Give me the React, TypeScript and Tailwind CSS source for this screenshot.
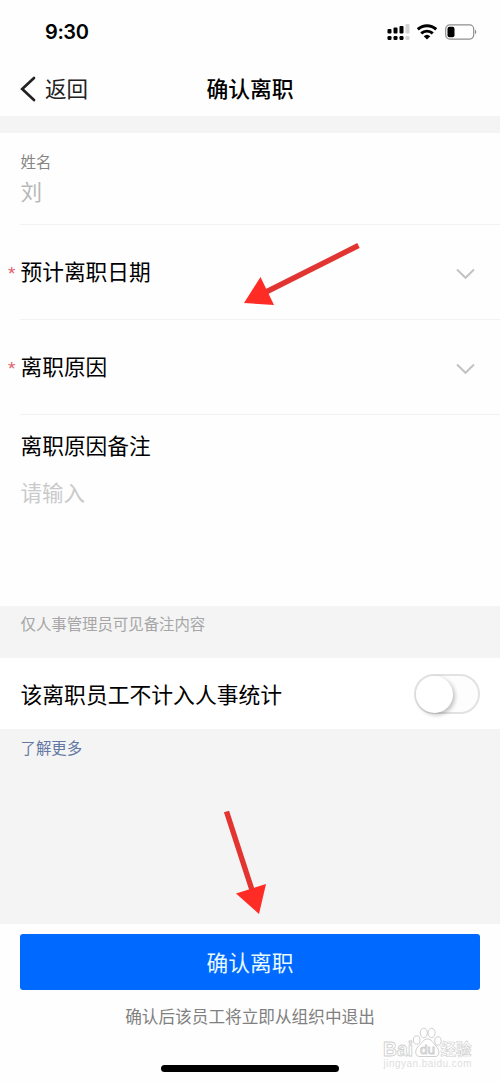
import { useState } from 'react';

function StatusBar() {
  return (
    <div className="flex h-16 items-center justify-between pl-[45px] pr-[23px]">
      <span className="font-['Inter'] text-[20px] font-semibold leading-none tracking-[-0.4px] text-black">9:30</span>
      <div className="flex items-center">
        <svg width="23" height="18" viewBox="0 0 23 18" fill="#000">
          <rect x="0.5" y="6" width="4" height="4.5" rx="1" />
          <rect x="6.5" y="4.5" width="4" height="6" rx="1" />
          <rect x="12.5" y="3" width="4" height="7.5" rx="1" />
          <rect x="18.5" y="1" width="4" height="9.5" rx="1" fill="#d4d4d4" />
          <rect x="0.5" y="13" width="4" height="4" rx="1.2" />
          <rect x="6.5" y="13" width="4" height="4" rx="1.2" />
          <rect x="12.5" y="13" width="4" height="4" rx="1.2" />
          <rect x="18.5" y="13" width="4" height="4" rx="1.2" fill="#d4d4d4" />
        </svg>
        <svg className="ml-[7px]" width="20" height="16" viewBox="0 0 20 16" fill="none" stroke="#000">
          <path d="M0.8 5.4a13.4 13.4 0 0 1 18.4 0" strokeWidth="3.1" />
          <path d="M4.2 9.4a8.5 8.5 0 0 1 11.6 0" strokeWidth="2.9" />
          <path d="M6.7 12.3a4.8 4.8 0 0 1 6.6 0L10 15.6z" fill="#000" stroke="none" />
        </svg>
        <svg className="ml-[8px]" width="32" height="16" viewBox="0 0 32 16">
          <rect x="0.7" y="0.9" width="28" height="14.2" rx="4" fill="#fff" stroke="#8f8f8f" strokeWidth="1.2" />
          <rect x="2.5" y="2.8" width="7" height="10.4" rx="2" fill="#000" />
          <path d="M30 5.8c1.7.5 1.7 3.9 0 4.4z" fill="#8f8f8f" />
        </svg>
      </div>
    </div>
  );
}

function NavBar() {
  return (
    <div className="relative flex h-[52px] justify-center pt-[8px]">
      <button className="absolute left-[20px] top-[8px] flex h-8 items-center text-[21.5px] text-[#222]">
        <svg className="mt-[2px]" width="16" height="26" viewBox="0 0 16 26" fill="none" stroke="#222" strokeWidth="2.7" strokeLinecap="round">
          <path d="M14 2 2.2 13 14 24" />
        </svg>
        <span className="ml-[9px]">返回</span>
      </button>
      <h1 className="text-[21.8px] font-medium leading-8 text-black">确认离职</h1>
    </div>
  );
}

function SelectRow({ label }: { label: string }) {
  return (
    <div className="relative ml-[20px] flex h-[95px] items-center justify-between border-b border-[#f2f2f2] pr-[25px]">
      <span className="absolute left-[-12px] top-[35px] font-['Liberation_Sans'] text-[19px] leading-7 text-[#e0606a]">*</span>
      <span className="-mt-[2px] ml-[0.5px] text-[21.7px] leading-8 text-black">{label}</span>
      <svg className="mt-[4px]" width="19" height="12" viewBox="0 0 19 12" fill="none" stroke="#c2c2c2" strokeWidth="1.9">
        <path d="M1 1.5 9.5 9.8 18 1.5" />
      </svg>
    </div>
  );
}

function Arrows() {
  return (
    <svg className="pointer-events-none absolute left-0 top-0" width="500" height="1082" viewBox="0 0 500 1082">
      <g stroke="#e23430" strokeWidth="5.4">
        <path d="M358.5 245.5 266 292" />
        <path d="M226.5 811.5 252 890" />
      </g>
      <g fill="#ff2b25">
        <path d="M244 303 260.5 277 274 305z" />
        <path d="M259 914 236 893.5 266 884z" />
      </g>
    </svg>
  );
}

function Watermark() {
  return (
    <svg className="absolute bottom-[10px] right-[21px]" width="100" height="46" viewBox="0 0 100 46" stroke="#cfcfcf" fill="#fff">
      <text x="4" y="30" fontFamily="Liberation Sans" fontWeight="700" fontSize="21" strokeWidth="0.9" textLength="30" lengthAdjust="spacingAndGlyphs">Bai</text>
      <ellipse cx="37.7" cy="14" rx="3.3" ry="4.2" />
      <ellipse cx="44.8" cy="7" rx="3.5" ry="4.8" />
      <ellipse cx="52.6" cy="7" rx="3.5" ry="4.8" />
      <ellipse cx="59" cy="15" rx="3.2" ry="4.2" />
      <path d="M48.500 13c4 0 5.500 4 8.500 7s5 10.500-1 10.500h-15c-6 0-5-7.500-1.500-10.500s5-7 9-7z" />
      <text x="41" y="27.500" fontFamily="Liberation Sans" fontSize="12.500" fill="none" strokeWidth="0.9" textLength="15" lengthAdjust="spacingAndGlyphs">du</text>
      <text x="61.500" y="29" fontFamily="Noto Sans CJK SC" fontWeight="700" fontSize="15.500" strokeWidth="0.6">经验</text>
      <text x="4.500" y="41" fontFamily="Liberation Sans" fontSize="10" fill="#dedede" stroke="none" textLength="88">jingyan.baidu.com</text>
    </svg>
  );
}

export default function App() {
  const [excluded, setExcluded] = useState(false);

  return (
    <div className="relative flex h-[1082px] w-[500px] flex-col overflow-hidden bg-[#f4f4f4] font-['Noto_Sans_CJK_SC',sans-serif]">
      <header className="h-[116px] bg-[#fefefe]">
        <StatusBar />
        <NavBar />
      </header>

      <section className="mt-[17px] h-[473px] bg-[#fefefe]">
        <div className="ml-[20px] h-[92px] border-b border-[#f2f2f2] pl-[0.5px] pt-[16px]">
          <p className="text-[15.4px] leading-6 text-[#858585]">姓名</p>
          <p className="mt-[2px] text-[21.5px] leading-8 text-[#b8b8b8]">刘</p>
        </div>
        <SelectRow label="预计离职日期" />
        <SelectRow label="离职原因" />
        <div className="pl-[20.5px] pt-[14px]">
          <p className="text-[21.7px] leading-8 text-black">离职原因备注</p>
          <p className="mt-[15px] text-[21.5px] leading-8 text-[#cacaca]">请输入</p>
        </div>
      </section>

      <p className="h-[52px] pl-[20.5px] pt-[5px] text-[15.4px] leading-6 text-[#a6a6a6]">仅人事管理员可见备注内容</p>

      <div className="flex h-[71px] items-center justify-between bg-white pl-[20.5px] pr-[20px]">
        <span className="text-[21.8px] leading-8 text-black">该离职员工不计入人事统计</span>
        <button
          role="switch"
          aria-checked={excluded}
          onClick={() => setExcluded(!excluded)}
          className={`flex h-10 w-[66px] rounded-full border-2 border-[#e2e2e2] bg-[#fdfdfd] ${excluded ? 'justify-end' : 'justify-start'}`}
        >
          <span className="h-[37px] w-[37px] rounded-full bg-white shadow-[2px_2px_4px_rgba(0,0,0,0.25)]" />
        </button>
      </div>

      <a className="pl-[20.5px] pt-[6px] text-[15.4px] leading-6 text-[#6478a4]">了解更多</a>

      <footer className="relative mt-auto flex h-[158px] flex-col items-center bg-[#fefefe] px-[20px] pt-[10px]">
        <button className="h-[56px] w-full rounded-[3px] bg-[#0069ff] text-[21.7px] text-[#e6faff]">确认离职</button>
        <p className="mt-[14px] text-[16.65px] leading-6 text-[#808080]">确认后该员工将立即从组织中退出</p>
        <div className="absolute bottom-[10px] left-[161px] h-[7px] w-[178px] rounded-full bg-black" />
        <Watermark />
      </footer>

      <Arrows />
    </div>
  );
}
